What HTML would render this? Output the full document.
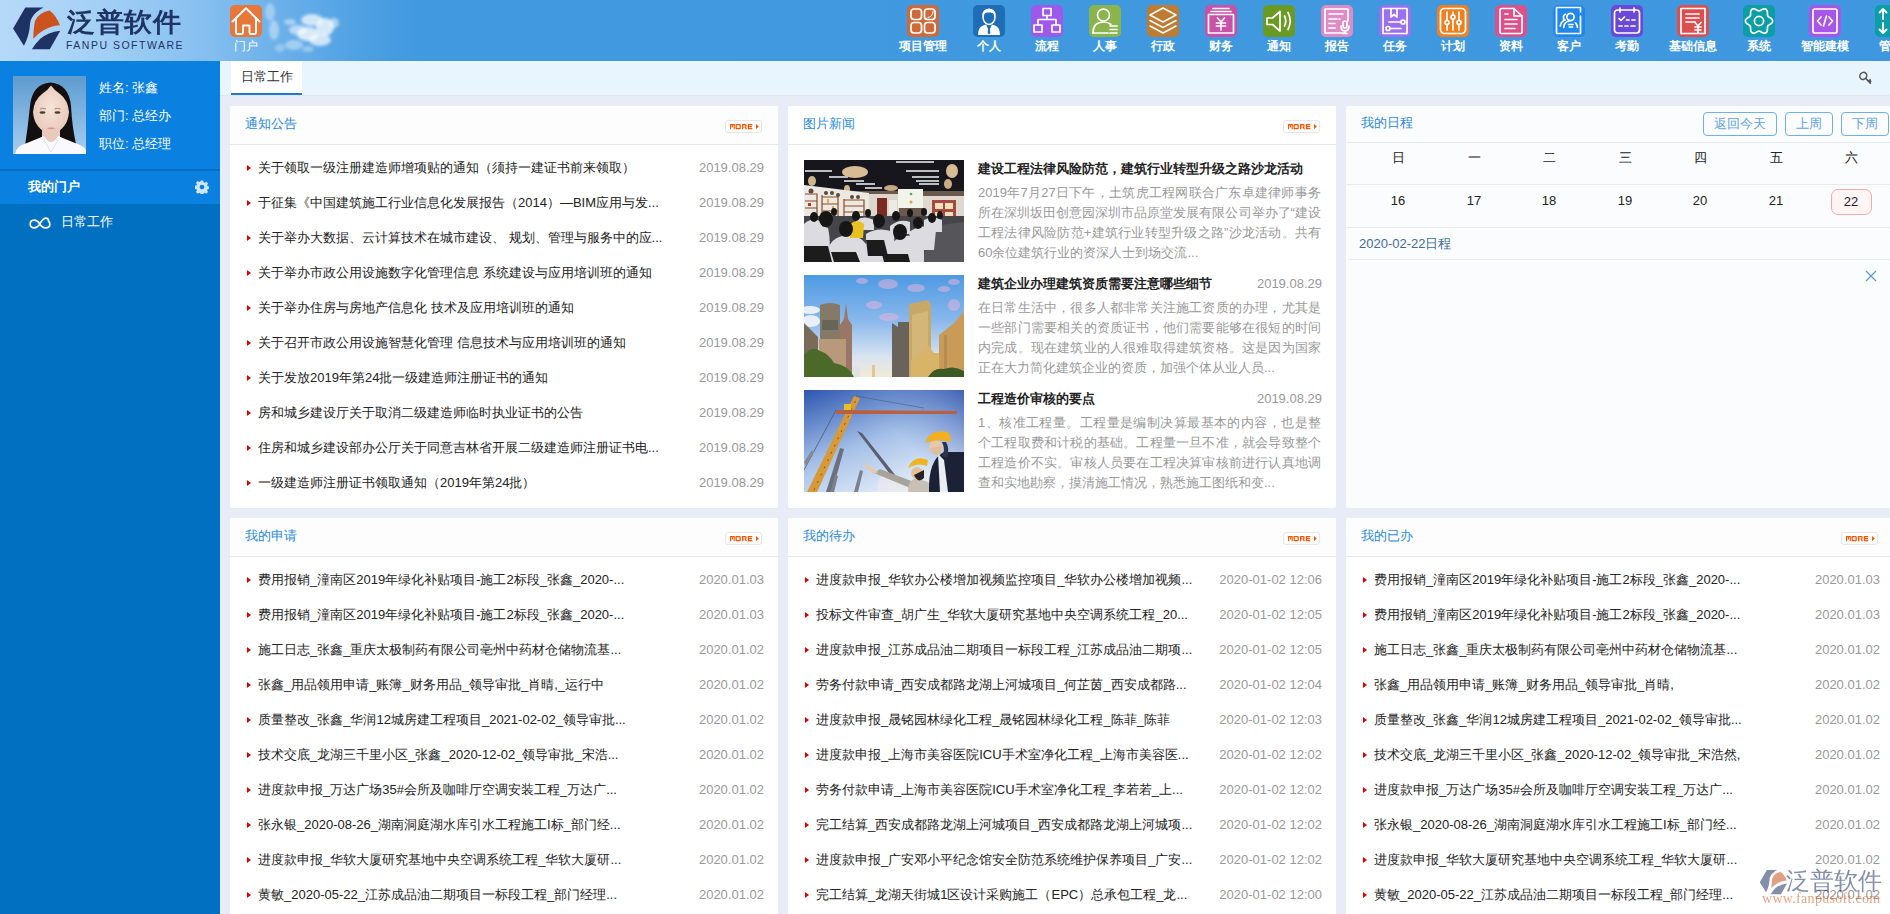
<!DOCTYPE html>
<html><head><meta charset="utf-8">
<style>
*{margin:0;padding:0;box-sizing:border-box}
html,body{width:1890px;height:914px;overflow:hidden}
body{font-family:"Liberation Sans",sans-serif;font-size:13px;color:#333;background:#e8ecf6;position:relative}
#hdr{position:absolute;left:0;top:0;width:1890px;height:61px;overflow:hidden;background:linear-gradient(90deg,#b6d9f8 0px,#a8d2f6 80px,#90c5f2 170px,#7cbaed 230px,#64ace8 300px,#4c9fe2 370px,#4199df 420px,#3f98df 1890px)}
#logo{position:absolute;left:0;top:0}
.logotxt{position:absolute;left:67px;top:6px;font-size:28px;line-height:36px;color:#1d3465;font-weight:bold;letter-spacing:0.6px;transform:scaleY(0.93);transform-origin:0 0}
.logoen{position:absolute;left:66px;top:39px;font-size:10.5px;line-height:13px;color:#1d3465;letter-spacing:1.5px}
.nav{position:absolute;top:0;height:61px}
.nav .ic{position:absolute;top:5px;width:32px;height:32px;border-radius:5px}
.nav .ic svg{position:absolute;left:0;top:0}
.nav .lb{position:absolute;top:38px;left:0;width:100%;text-align:center;font-size:12px;line-height:16px;color:#fff;white-space:nowrap;font-weight:bold}
#side{position:absolute;left:0;top:61px;width:220px;height:853px;background:#0270c1}
#side .top{position:absolute;left:0;top:0;width:220px;height:143px;background:#0a80e0}
#side .div{position:absolute;left:0;top:108px;width:220px;height:2px;background:#0a6fc4}
.uinfo{position:absolute;left:99px;color:#fff;font-size:13px;line-height:16px;white-space:nowrap}
#tabbar{position:absolute;left:220px;top:61px;width:1670px;height:35px;background:#e8f5fe;border-bottom:1px solid #e4e6ea}
#tab{position:absolute;left:11px;top:0;width:71px;height:34px;background:#fff;border-bottom:2px solid #1f7ad0;text-align:center;line-height:32px;font-size:13px;color:#333}
.panel{position:absolute;width:548px;background:#fff;border-radius:2px;overflow:hidden}
.ph{height:39px;border-bottom:1px solid #e8e8e8;background:#fcfdfc;position:relative}
.ph .t{position:absolute;left:15px;top:10px;font-size:13px;color:#2b8ae2;line-height:16px}
.more{position:absolute;left:495px;top:14px;width:37px;height:13px;border:1px solid #e6e6e6;border-radius:3px;background:#fff}
.li{position:absolute;left:0;width:548px;height:20px;line-height:20px}
.li .tri{position:absolute;left:17px;top:8px;width:0;height:0;border-left:4px solid #e10000;border-top:3px solid transparent;border-bottom:3px solid transparent}
.li .tx{position:absolute;left:28px;top:1px;color:#222;white-space:nowrap}
.li .dt{position:absolute;right:14px;top:1px;color:#999;white-space:nowrap}
.news .img{position:absolute;left:16px;width:160px;height:102px;overflow:hidden}
.news .nt{position:absolute;left:190px;width:343px;font-weight:bold;color:#222;line-height:20px;white-space:nowrap}
.news .nd{position:absolute;right:14px;color:#999;line-height:20px}
.news .nb{position:absolute;left:190px;width:343px;color:#999;line-height:20px}
.news .nb div{text-align:justify;text-align-last:justify;height:20px;white-space:nowrap;overflow:visible}
.btn{position:absolute;top:6px;height:24px;border:1px solid #6fb0ea;border-radius:4px;color:#5fa3e3;font-size:13px;line-height:22px;text-align:center}
.wk{position:absolute;width:40px;text-align:center;color:#222;line-height:20px}
.hl{position:absolute;left:0;width:548px;height:1px;background:#e8eaec}
</style></head><body>

<div id="hdr">
<svg style="position:absolute;left:250px;top:0" width="110" height="61" viewBox="0 0 110 61">
<defs><filter id="bl" x="-50%" y="-50%" width="200%" height="200%"><feGaussianBlur stdDeviation="1.8"/></filter></defs>
<g fill="#fff" filter="url(#bl)">
<ellipse cx="20" cy="12" rx="5" ry="9" opacity="0.35"/>
<ellipse cx="24" cy="30" rx="5" ry="10" opacity="0.4"/>
<ellipse cx="40" cy="22" rx="6" ry="3" opacity="0.45"/>
<ellipse cx="48" cy="30" rx="9" ry="5" opacity="0.55"/>
<ellipse cx="62" cy="20" rx="11" ry="6" opacity="0.7"/>
<ellipse cx="75" cy="27" rx="9" ry="9" opacity="0.75"/>
<ellipse cx="58" cy="34" rx="11" ry="7" opacity="0.75"/>
<ellipse cx="70" cy="40" rx="11" ry="6" opacity="0.7"/>
<ellipse cx="84" cy="23" rx="5" ry="5" opacity="0.5"/>
<ellipse cx="44" cy="45" rx="9" ry="5" opacity="0.4"/>
<ellipse cx="30" cy="48" rx="5" ry="4" opacity="0.3"/>
<ellipse cx="58" cy="49" rx="6" ry="3" opacity="0.35"/>
</g></svg>
<svg id="logo" width="64" height="61" viewBox="0 0 64 61">
<path fill="#1e3263" d="M13.1 28.5 L25.3 7.4 L43.6 7.4 C36 11 30.5 17 30 24 C29.5 33 27 40 23.9 45.8 Z"/>
<path fill="#cc531e" d="M49.5 10.5 Q56 15 60 25.3 Q51 26 44 30 Q38 33.5 33.3 38.7 Q33.5 28 35 21 Q38 13 49.5 10.5Z"/>
<path fill="#1e3263" d="M60.3 30.7 L49.8 49.2 L31.9 49.2 Q36 43 40 39 Q48 32 60.3 30.7Z"/>
</svg>
<div class="logotxt">泛普软件</div><div class="logoen">FANPU SOFTWARE</div>
<div class="nav" style="left:214px;width:64px"><div class="ic" style="left:16px;background:#e8773a"><svg width="32" height="32" viewBox="0 0 32 32"><path stroke-width="1.9" fill="none" stroke="#fff" stroke-linecap="round" stroke-linejoin="round" d="M2.5 16.5 L16 3.3 L29.5 16.5"/><path stroke-width="1.9" fill="none" stroke="#fff" stroke-linecap="round" stroke-linejoin="round" d="M6 13 V27.5 Q6 29 7.5 29 H11.5 Q13 29 13 27.5 V20.5 H19.5 V27.5 Q19.5 29 21 29 H24.5 Q26 29 26 27.5 V13"/></svg></div><div class="lb" style="font-weight:normal">门户</div></div>
<div class="nav" style="left:886px;width:74px"><div class="ic" style="left:21px;background:#cd6a38"><svg width="32" height="32" viewBox="0 0 32 32"><rect fill="none" stroke="#fff" stroke-width="1.7" stroke-linecap="round" stroke-linejoin="round" x="4" y="4" width="10.5" height="10.5" rx="3"/><rect fill="none" stroke="#fff" stroke-width="1.7" stroke-linecap="round" stroke-linejoin="round" x="17.5" y="4" width="10.5" height="10.5" rx="3"/><rect fill="none" stroke="#fff" stroke-width="1.7" stroke-linecap="round" stroke-linejoin="round" x="4" y="17.5" width="10.5" height="10.5" rx="3"/><rect fill="none" stroke="#fff" stroke-width="1.7" stroke-linecap="round" stroke-linejoin="round" x="17.5" y="17.5" width="10.5" height="10.5" rx="3"/><path stroke-width="1" fill="none" stroke="#fff" stroke-linecap="round" stroke-linejoin="round" d="M26 6 Q26 12 21 12.5"/></svg></div><div class="lb">项目管理</div></div>
<div class="nav" style="left:960px;width:58px"><div class="ic" style="left:13px;background:#1e6db5"><svg width="32" height="32" viewBox="0 0 32 32"><path fill="#fff" d="M5 30 Q5 22 10 20.5 L13 19.5 L16 26 L19 19.5 L22 20.5 Q27 22 27 30 Z"/><path fill="#1e6db5" d="M15.2 21 L16.8 21 L17.3 28 L16 29.5 L14.7 28 Z"/><ellipse cx="16" cy="12" rx="6" ry="7.5" fill="#1e6db5" stroke="#fff" stroke-width="1.6"/><path fill="#fff" d="M9.3 11 Q9 4 16 3.5 Q23 4 22.7 11 Q21 7 16 7.5 Q11 7 9.3 11Z"/></svg></div><div class="lb">个人</div></div>
<div class="nav" style="left:1018px;width:58px"><div class="ic" style="left:13px;background:#9d58ec"><svg width="32" height="32" viewBox="0 0 32 32"><rect fill="none" stroke="#fff" stroke-width="1.7" stroke-linecap="round" stroke-linejoin="round" x="12" y="3.5" width="8" height="7"/><path fill="none" stroke="#fff" stroke-width="1.7" stroke-linecap="round" stroke-linejoin="round" d="M16 10.5 V14.5 M7 20 V14.5 H25 V20"/><rect fill="none" stroke="#fff" stroke-width="1.7" stroke-linecap="round" stroke-linejoin="round" x="3" y="20" width="8" height="7"/><rect fill="none" stroke="#fff" stroke-width="1.7" stroke-linecap="round" stroke-linejoin="round" x="21" y="20" width="8" height="7"/></svg></div><div class="lb">流程</div></div>
<div class="nav" style="left:1076px;width:58px"><div class="ic" style="left:13px;background:#8ab44c"><svg width="32" height="32" viewBox="0 0 32 32"><circle fill="none" stroke="#fff" stroke-width="1.7" stroke-linecap="round" stroke-linejoin="round" cx="14.5" cy="10" r="6"/><path fill="none" stroke="#fff" stroke-width="1.7" stroke-linecap="round" stroke-linejoin="round" d="M4 28 Q4 17 14.5 17 Q19 17 22 19.5"/><path fill="none" stroke="#fff" stroke-width="1.7" stroke-linecap="round" stroke-linejoin="round" d="M4 28 H19"/><path fill="none" stroke="#fff" stroke-width="1.7" stroke-linecap="round" stroke-linejoin="round" d="M21 21 H28 M21 24.5 H28 M21 28 H28"/></svg></div><div class="lb">人事</div></div>
<div class="nav" style="left:1134px;width:58px"><div class="ic" style="left:13px;background:#bf7b30"><svg width="32" height="32" viewBox="0 0 32 32"><path stroke-width="1.5" fill="none" stroke="#fff" stroke-linecap="round" stroke-linejoin="round" d="M16 3 L29 10 L16 17 L3 10 Z"/><path stroke-width="1.5" fill="none" stroke="#fff" stroke-linecap="round" stroke-linejoin="round" d="M3 15.5 L16 22.5 L29 15.5"/><path stroke-width="1.5" fill="none" stroke="#fff" stroke-linecap="round" stroke-linejoin="round" d="M3 21 L16 28 L29 21"/></svg></div><div class="lb">行政</div></div>
<div class="nav" style="left:1192px;width:58px"><div class="ic" style="left:13px;background:#c951a8"><svg width="32" height="32" viewBox="0 0 32 32"><path fill="none" stroke="#fff" stroke-width="1.7" stroke-linecap="round" stroke-linejoin="round" d="M8 3.5 H24 M6 6.5 H26"/><rect fill="none" stroke="#fff" stroke-width="1.7" stroke-linecap="round" stroke-linejoin="round" x="3.5" y="9.5" width="25" height="18.5"/><path fill="none" stroke="#fff" stroke-width="1.7" stroke-linecap="round" stroke-linejoin="round" d="M12.5 13 L16 17 L19.5 13 M11.5 18 H20.5 M11.5 21 H20.5 M16 17 V25"/></svg></div><div class="lb">财务</div></div>
<div class="nav" style="left:1250px;width:58px"><div class="ic" style="left:13px;background:#6b9a24"><svg width="32" height="32" viewBox="0 0 32 32"><path fill="none" stroke="#fff" stroke-width="1.7" stroke-linecap="round" stroke-linejoin="round" d="M4 13 H9.5 L17 6.5 V26 L9.5 19.5 H4 Z"/><path fill="none" stroke="#fff" stroke-width="1.7" stroke-linecap="round" stroke-linejoin="round" d="M21.5 11 Q24 16 21.5 21 M25 7.5 Q29.5 16 25 24.5"/></svg></div><div class="lb">通知</div></div>
<div class="nav" style="left:1308px;width:58px"><div class="ic" style="left:13px;background:#de8cc6"><svg width="32" height="32" viewBox="0 0 32 32"><path fill="none" stroke="#fff" stroke-width="1.7" stroke-linecap="round" stroke-linejoin="round" d="M23 28 H4 V4 H27 V16"/><path fill="none" stroke="#fff" stroke-width="1.7" stroke-linecap="round" stroke-linejoin="round" d="M8 9 H22 M8 14 H16 M8 18.5 H14 M8 23 H14 M18 14 H19"/><rect fill="none" stroke="#fff" stroke-width="1.7" stroke-linecap="round" stroke-linejoin="round" x="22" y="16" width="4" height="7" rx="2"/><path fill="none" stroke="#fff" stroke-width="1.7" stroke-linecap="round" stroke-linejoin="round" d="M20 21 Q20 26 24 26 Q28 26 28 21 M24 26 V28.5 M22 28.5 H26"/></svg></div><div class="lb">报告</div></div>
<div class="nav" style="left:1366px;width:58px"><div class="ic" style="left:13px;background:#9a70f0"><svg width="32" height="32" viewBox="0 0 32 32"><rect fill="none" stroke="#fff" stroke-width="1.7" stroke-linecap="round" stroke-linejoin="round" x="4" y="3.5" width="24" height="25"/><path fill="none" stroke="#fff" stroke-width="1.7" stroke-linecap="round" stroke-linejoin="round" d="M12 3.5 V12 L15 9.5 L18 12 V3.5"/><circle fill="none" stroke="#fff" stroke-width="1.7" stroke-linecap="round" stroke-linejoin="round" cx="24" cy="17" r="2"/><path fill="none" stroke="#fff" stroke-width="1.7" stroke-linecap="round" stroke-linejoin="round" d="M10 17 H22"/><circle fill="none" stroke="#fff" stroke-width="1.7" stroke-linecap="round" stroke-linejoin="round" cx="9" cy="23.5" r="2"/><path fill="none" stroke="#fff" stroke-width="1.7" stroke-linecap="round" stroke-linejoin="round" d="M11 23.5 H22"/></svg></div><div class="lb">任务</div></div>
<div class="nav" style="left:1424px;width:58px"><div class="ic" style="left:13px;background:#f0801f"><svg width="32" height="32" viewBox="0 0 32 32"><rect fill="none" stroke="#fff" stroke-width="1.7" stroke-linecap="round" stroke-linejoin="round" x="3.5" y="3.5" width="25" height="25" rx="4"/><path fill="none" stroke="#fff" stroke-width="1.7" stroke-linecap="round" stroke-linejoin="round" d="M10 7 V15.5 M10 19.5 V25 M16 7 V10 M16 14 V25 M22 7 V15.5 M22 19.5 V25"/><circle fill="none" stroke="#fff" stroke-width="1.7" stroke-linecap="round" stroke-linejoin="round" cx="10" cy="17.5" r="2"/><circle fill="none" stroke="#fff" stroke-width="1.7" stroke-linecap="round" stroke-linejoin="round" cx="16" cy="12" r="2"/><circle fill="none" stroke="#fff" stroke-width="1.7" stroke-linecap="round" stroke-linejoin="round" cx="22" cy="17.5" r="2"/></svg></div><div class="lb">计划</div></div>
<div class="nav" style="left:1482px;width:58px"><div class="ic" style="left:13px;background:#dd508a"><svg width="32" height="32" viewBox="0 0 32 32"><path fill="none" stroke="#fff" stroke-width="1.7" stroke-linecap="round" stroke-linejoin="round" d="M5 5 Q5 3.5 6.5 3.5 H19 L27 11 V27 Q27 28.5 25.5 28.5 H6.5 Q5 28.5 5 27 Z"/><path fill="none" stroke="#fff" stroke-width="1.7" stroke-linecap="round" stroke-linejoin="round" d="M19 3.5 V11 H27"/><path fill="none" stroke="#fff" stroke-width="1.7" stroke-linecap="round" stroke-linejoin="round" d="M10 9 H13 M10 14.5 H22 M10 19 H22 M10 23.5 H20"/></svg></div><div class="lb">资料</div></div>
<div class="nav" style="left:1540px;width:58px"><div class="ic" style="left:13px;background:#1f88ea"><svg width="32" height="32" viewBox="0 0 32 32"><path fill="none" stroke="#fff" stroke-width="1.7" stroke-linecap="round" stroke-linejoin="round" d="M27.5 7 V2.5 H3.5 V28.5 H27.5 V11"/><circle fill="none" stroke="#fff" stroke-width="1.7" stroke-linecap="round" stroke-linejoin="round" cx="17.5" cy="12" r="3.6"/><path fill="none" stroke="#fff" stroke-width="1.7" stroke-linecap="round" stroke-linejoin="round" d="M10.8 22.5 Q11 17 16 16 M22.5 17.8 Q24.2 19.8 24.5 22.5 M12.5 9.3 Q9.5 10.5 10.8 14.2 M7.3 21 Q8 16.5 12 15 M15.5 19.5 H20 M16.3 22 H19.5"/></svg></div><div class="lb">客户</div></div>
<div class="nav" style="left:1598px;width:58px"><div class="ic" style="left:13px;background:#6c48d8"><svg width="32" height="32" viewBox="0 0 32 32"><rect fill="none" stroke="#fff" stroke-width="1.7" stroke-linecap="round" stroke-linejoin="round" x="3.5" y="5" width="25" height="23" rx="3"/><path fill="none" stroke="#fff" stroke-width="1.7" stroke-linecap="round" stroke-linejoin="round" d="M9 3 V7 M23 3 V7"/><path fill="none" stroke="#fff" stroke-width="1.7" stroke-linecap="round" stroke-linejoin="round" d="M8 13.5 L10 15.5 L13.5 12 M15.5 15 H18 M21 15 H24 M8 21 H11 M14 21 H17 M20 21 H24"/></svg></div><div class="lb">考勤</div></div>
<div class="nav" style="left:1656px;width:74px"><div class="ic" style="left:21px;background:#dd4f4f"><svg width="32" height="32" viewBox="0 0 32 32"><rect fill="none" stroke="#fff" stroke-width="1.7" stroke-linecap="round" stroke-linejoin="round" x="4" y="3.5" width="24" height="25"/><path fill="none" stroke="#fff" stroke-width="1.7" stroke-linecap="round" stroke-linejoin="round" d="M9 9 H22 M9 13 H22 M9 17 H18"/><path fill="none" stroke="#fff" stroke-width="1.7" stroke-linecap="round" stroke-linejoin="round" d="M18 17.5 L21 21 L24 17.5 M18 22 H24 M18 25 H24 M21 21 V28"/></svg></div><div class="lb">基础信息</div></div>
<div class="nav" style="left:1730px;width:58px"><div class="ic" style="left:13px;background:#0b9ea6"><svg width="32" height="32" viewBox="0 0 32 32"><path stroke-width="1.7" fill="none" stroke="#fff" stroke-linecap="round" stroke-linejoin="round" d="M29.65 16.00 L29.49 16.88 L29.03 17.71 L28.33 18.45 L27.49 19.08 L26.63 19.61 L25.85 20.08 L25.22 20.55 L24.79 21.07 L24.55 21.71 L24.46 22.49 L24.44 23.40 L24.41 24.41 L24.29 25.45 L24.00 26.42 L23.51 27.24 L22.83 27.82 L21.98 28.12 L21.03 28.14 L20.04 27.90 L19.08 27.49 L18.19 27.01 L17.39 26.57 L16.67 26.26 L16.00 26.15 L15.33 26.26 L14.61 26.57 L13.81 27.01 L12.92 27.49 L11.96 27.90 L10.97 28.14 L10.02 28.12 L9.18 27.82 L8.49 27.24 L8.00 26.42 L7.71 25.45 L7.59 24.41 L7.56 23.40 L7.54 22.49 L7.45 21.71 L7.21 21.07 L6.78 20.55 L6.15 20.08 L5.37 19.61 L4.51 19.08 L3.67 18.45 L2.97 17.71 L2.51 16.88 L2.35 16.00 L2.51 15.12 L2.97 14.29 L3.67 13.55 L4.51 12.92 L5.37 12.39 L6.15 11.92 L6.78 11.45 L7.21 10.93 L7.45 10.29 L7.54 9.51 L7.56 8.60 L7.59 7.59 L7.71 6.55 L8.00 5.58 L8.49 4.76 L9.17 4.18 L10.02 3.88 L10.97 3.86 L11.96 4.10 L12.92 4.51 L13.81 4.99 L14.61 5.43 L15.33 5.74 L16.00 5.85 L16.67 5.74 L17.39 5.43 L18.19 4.99 L19.08 4.51 L20.04 4.10 L21.03 3.86 L21.98 3.88 L22.83 4.18 L23.51 4.76 L24.00 5.58 L24.29 6.55 L24.41 7.59 L24.44 8.60 L24.46 9.51 L24.55 10.29 L24.79 10.92 L25.22 11.45 L25.85 11.92 L26.63 12.39 L27.49 12.92 L28.33 13.55 L29.03 14.29 L29.49 15.12Z"/><circle fill="none" stroke="#fff" stroke-width="1.7" stroke-linecap="round" stroke-linejoin="round" cx="16" cy="16" r="4.6"/></svg></div><div class="lb">系统</div></div>
<div class="nav" style="left:1788px;width:74px"><div class="ic" style="left:21px;background:#a856ea"><svg width="32" height="32" viewBox="0 0 32 32"><rect fill="none" stroke="#fff" stroke-width="1.7" stroke-linecap="round" stroke-linejoin="round" x="4" y="4" width="24" height="24" rx="2"/><path fill="none" stroke="#fff" stroke-width="1.7" stroke-linecap="round" stroke-linejoin="round" d="M12 12 L8.5 16 L12 20 M20 12 L23.5 16 L20 20 M17.5 11 L14.5 21"/></svg></div><div class="lb">智能建模</div></div>
<div class="nav" style="left:1862px;width:58px"><div class="ic" style="left:13px;background:#0b9ea6"><svg width="32" height="32" viewBox="0 0 32 32"><path stroke-width="1.9" fill="none" stroke="#fff" stroke-linecap="round" stroke-linejoin="round" d="M8 4 V14 M4.5 7.5 L8 4 L11.5 7.5 M8 18 V28 M4.5 24.5 L8 28 L11.5 24.5"/></svg></div><div class="lb">管理</div></div>
</div>
<div id="side"><div class="top"></div><div class="div"></div>
<svg style="position:absolute;left:13px;top:15px" width="73" height="78" viewBox="0 0 73 78">
<defs><linearGradient id="pbg" x1="0" y1="0" x2="0" y2="1"><stop offset="0" stop-color="#5e9bd0"/><stop offset="1" stop-color="#a6cef0"/></linearGradient>
<radialGradient id="skin" cx="0.5" cy="0.45" r="0.6"><stop offset="0" stop-color="#f6e4da"/><stop offset="1" stop-color="#e8c6b6"/></radialGradient></defs>
<rect width="73" height="78" fill="url(#pbg)"/>
<path fill="#141012" d="M12 70 Q15 50 17 30 Q19 8 37.5 6.5 Q56 8 58 30 Q59 50 63 68 Q50 72 37 70 Q22 72 12 70Z"/>
<path fill="url(#skin)" d="M20 36 Q21 24 29 18 Q35 14 38 9.5 Q41 14 47 18 Q55 24 56 36 Q55 53 38 59 Q21 53 20 36Z"/>
<path fill="#e9cbbd" d="M29 52 H47 V68 H29Z"/>
<path fill="#fafafc" d="M2 78 Q3 70 14 67 Q24 63 31 60 Q38 72 45 60 Q52 63 62 67 Q71 70 73 74 V78Z"/>
<path fill="none" stroke="#d8d8e0" stroke-width=".8" d="M31 64 L38 76 L45 64"/>
<ellipse cx="29.5" cy="36.5" rx="3" ry="1.3" fill="#4a3a34"/><ellipse cx="44.5" cy="36.5" rx="3" ry="1.3" fill="#4a3a34"/>
<path d="M27 33 Q30 31.5 33 33 M41.5 33 Q44.5 31.5 47.5 33" stroke="#8a7066" stroke-width=".8" fill="none"/>
<path d="M33.5 52 Q38 54.5 42.5 52 Q38 51 33.5 52Z" fill="#e08a92"/>
</svg>
<div class="uinfo" style="top:19px">姓名: 张鑫</div>
<div class="uinfo" style="top:47px">部门: 总经办</div>
<div class="uinfo" style="top:75px">职位: 总经理</div>
<div style="position:absolute;left:28px;top:118px;color:#fff;font-weight:bold;font-size:13px;line-height:16px">我的门户</div>
<svg style="position:absolute;left:195px;top:119px" width="14" height="14" viewBox="0 0 16 16"><path fill="#cfe6fa" fill-rule="evenodd" d="M6.6 0.5h2.8l.4 2 1.4.6 1.7-1.1 2 2-1.1 1.7.6 1.4 2 .4v2.8l-2 .4-.6 1.4 1.1 1.7-2 2-1.7-1.1-1.4.6-.4 2H6.6l-.4-2-1.4-.6-1.7 1.1-2-2 1.1-1.7-.6-1.4-2-.4V6.6l2-.4.6-1.4L1.1 3.1l2-2 1.7 1.1 1.4-.6zM8 5.3A2.7 2.7 0 1 0 8 10.7 2.7 2.7 0 1 0 8 5.3z"/></svg>
<svg style="position:absolute;left:29px;top:155px" width="22" height="14" viewBox="0 0 22 14"><path fill="none" stroke="#fff" stroke-width="1.7" d="M10.5 7.5 Q8 4 5 4.2 Q1.2 4.5 1.2 8 Q1.2 11.6 5 11.8 Q8 12 10.5 8.5 Q13.5 3 16 2.2 Q19.5 1.8 19.6 5.2 Q21 6.4 20.8 8.8 Q20.4 11.8 16.5 11.8 Q13 11.8 10.5 7.5Z"/></svg>
<div style="position:absolute;left:61px;top:153px;color:#fff;font-size:13px;line-height:16px">日常工作</div>
</div>
<div id="tabbar"><div id="tab">日常工作</div>
<svg style="position:absolute;left:1636px;top:8px" width="18" height="18" viewBox="0 0 18 18"><ellipse cx="7.3" cy="6.9" rx="3.3" ry="3.7" transform="rotate(40 7.3 6.9)" fill="none" stroke="#555" stroke-width="1.5"/><path d="M9.6 9.3 L14.8 14.6 M12.6 12.4 L14.6 10.4 M13.6 13.4 L15.2 11.8" stroke="#555" stroke-width="1.6" fill="none"/></svg>
</div>
<div class="panel" style="left:230px;top:106px;height:402px">
<div class="ph"><span class="t">通知公告</span><span class="more"><svg width="37" height="13" viewBox="0 0 37 13" style="position:absolute;left:-1px;top:-1px"><g fill="#ff5500"><path d="M5 4h4.8v5.2H8.7V5.2H7.95V7.4H6.85V5.2H6.1v4H5z"/><path d="M11.2 4h3.9l.7.7v3.8l-.7.7h-3.9l-.7-.7V4.7zm.6 1.3v2.6h2.7V5.3z"/><path d="M17 4h3.9l.7.7v1.7l-.5.5.9 2.3h-1.4l-.8-2h-1.5v2H17zm1.3 1.3v1.4h2V5.3z"/><path d="M22.8 4h4.5v1.3h-3.2v.7h2.9v1.2h-2.9v.7h3.2v1.3h-4.5z"/><path d="M31 4l2.8 2.6L31 9.2z"/></g></svg></span></div>
<div class="li" style="top:51px"><i class="tri"></i><span class="tx">关于领取一级注册建造师增项贴的通知（须持一建证书前来领取）</span><span class="dt">2019.08.29</span></div>
<div class="li" style="top:86px"><i class="tri"></i><span class="tx">于征集《中国建筑施工行业信息化发展报告（2014）—BIM应用与发...</span><span class="dt">2019.08.29</span></div>
<div class="li" style="top:121px"><i class="tri"></i><span class="tx">关于举办大数据、云计算技术在城市建设、 规划、管理与服务中的应...</span><span class="dt">2019.08.29</span></div>
<div class="li" style="top:156px"><i class="tri"></i><span class="tx">关于举办市政公用设施数字化管理信息 系统建设与应用培训班的通知</span><span class="dt">2019.08.29</span></div>
<div class="li" style="top:191px"><i class="tri"></i><span class="tx">关于举办住房与房地产信息化 技术及应用培训班的通知</span><span class="dt">2019.08.29</span></div>
<div class="li" style="top:226px"><i class="tri"></i><span class="tx">关于召开市政公用设施智慧化管理 信息技术与应用培训班的通知</span><span class="dt">2019.08.29</span></div>
<div class="li" style="top:261px"><i class="tri"></i><span class="tx">关于发放2019年第24批一级建造师注册证书的通知</span><span class="dt">2019.08.29</span></div>
<div class="li" style="top:296px"><i class="tri"></i><span class="tx">房和城乡建设厅关于取消二级建造师临时执业证书的公告</span><span class="dt">2019.08.29</span></div>
<div class="li" style="top:331px"><i class="tri"></i><span class="tx">住房和城乡建设部办公厅关于同意吉林省开展二级建造师注册证书电...</span><span class="dt">2019.08.29</span></div>
<div class="li" style="top:366px"><i class="tri"></i><span class="tx">一级建造师注册证书领取通知（2019年第24批）</span><span class="dt">2019.08.29</span></div>
</div>
<div class="panel news" style="left:788px;top:106px;height:402px"><div class="ph" style="background:#fff"><span class="t">图片新闻</span><span class="more"><svg width="37" height="13" viewBox="0 0 37 13" style="position:absolute;left:-1px;top:-1px"><g fill="#ff5500"><path d="M5 4h4.8v5.2H8.7V5.2H7.95V7.4H6.85V5.2H6.1v4H5z"/><path d="M11.2 4h3.9l.7.7v3.8l-.7.7h-3.9l-.7-.7V4.7zm.6 1.3v2.6h2.7V5.3z"/><path d="M17 4h3.9l.7.7v1.7l-.5.5.9 2.3h-1.4l-.8-2h-1.5v2H17zm1.3 1.3v1.4h2V5.3z"/><path d="M22.8 4h4.5v1.3h-3.2v.7h2.9v1.2h-2.9v.7h3.2v1.3h-4.5z"/><path d="M31 4l2.8 2.6L31 9.2z"/></g></svg></span></div>
<div class="img" style="top:54px"><svg width="160" height="102" viewBox="0 0 160 102"><defs><filter id="f1" x="0" y="0" width="100%" height="100%"><feGaussianBlur stdDeviation="0.6"/></filter></defs><g filter="url(#f1)">
<rect width="160" height="102" fill="#6a5a4c"/>
<rect width="160" height="31" fill="#17181e"/>
<g stroke="#f4f4f4" stroke-width="1.3"><path d="M1 11 H28 M25 17 H44 M40 21 H60 M52 24 H71 M102 11 H135 M108 17 H135 M112 21 H135 M115 24 H135 M61 28 H78 M92 2 H130"/></g>
<ellipse cx="51" cy="12" rx="13" ry="6" fill="#d8bc94"/>
<ellipse cx="148" cy="11" rx="6" ry="7" fill="#d8bc94"/><ellipse cx="144" cy="24" rx="4" ry="5" fill="#c8ac84"/>
<ellipse cx="8" cy="21" rx="4" ry="5" fill="#d0b48c"/><ellipse cx="43" cy="29" rx="3" ry="4" fill="#d0b48c"/><ellipse cx="87" cy="28" rx="7" ry="3" fill="#c8a880"/>
<path d="M0 25 L65 33 V60 H0Z" fill="#ece8e2"/>
<g fill="none" stroke="#8a4a2a" stroke-width="1.2"><path d="M1 34 H13 V58 M1 41 H13 M1 48 H13 M18 35 V58 M18 37 H34 V58 M18 44 H34 M18 51 H34 M40 39 V58 M40 40 H60 V58 M40 46 H60 M40 52 H60"/></g>
<g fill="#5a4a40"><circle cx="7" cy="31" r="2.5"/><circle cx="22" cy="33" r="2"/><circle cx="28" cy="33" r="2"/><circle cx="34" cy="35" r="2"/><circle cx="48" cy="37" r="2"/><circle cx="54" cy="37" r="2"/></g>
<g fill="#d8b040"><rect x="23" y="39" width="2" height="4"/><rect x="28" y="46" width="2" height="4"/><rect x="4" y="43" width="3" height="3" fill="#c03030"/></g>
<rect x="65" y="34" width="30" height="24" fill="#dcd6cc"/>
<rect x="73" y="38" width="10" height="18" fill="#7a2a22"/><rect x="85" y="40" width="8" height="14" fill="#eceae4"/>
<rect x="94" y="29" width="25" height="19" fill="#f0f4ea"/><circle cx="107" cy="34" r="1.3" fill="#60a060"/><circle cx="107" cy="42" r="1.5" fill="#e0a050"/>
<rect x="119" y="36" width="41" height="30" fill="#dedad2"/>
<rect x="128" y="40" width="24" height="26" fill="#a8483a"/><g fill="#f0e0c0"><rect x="131" y="43" width="8" height="6"/><rect x="141" y="43" width="8" height="6"/><rect x="131" y="52" width="8" height="6"/><rect x="141" y="52" width="8" height="6"/></g>
<rect x="0" y="56" width="160" height="46" fill="#45454a"/>
<path d="M128 66 L160 62 V102 H118Z" fill="#55555a"/>
<g fill="#dcdce0"><path d="M0 102 V72 Q8 62 24 68 Q27 80 25 102Z"/><path d="M22 102 Q22 80 38 76 Q56 74 62 84 V102Z"/><path d="M62 102 V74 Q74 66 90 72 L91 102Z"/><path d="M82 102 Q84 80 100 76 Q116 74 120 84 V102Z"/><path d="M105 72 Q118 62 132 70 L130 90 H108Z"/><path d="M86 66 Q96 58 106 62 L106 74 H86Z"/><path d="M0 64 Q8 56 18 62 L18 72 H0Z"/><path d="M52 60 Q60 55 70 60 V70 H52Z"/><path d="M120 60 Q128 55 138 60 V72 H120Z"/></g>
<g fill="#e8c020"><path d="M46 64 Q54 58 60 64 L59 78 H46Z"/></g>
<g fill="#151515"><ellipse cx="22" cy="59" rx="7" ry="8"/><ellipse cx="42" cy="69" rx="7" ry="8"/><ellipse cx="75" cy="61" rx="6" ry="7"/><ellipse cx="96" cy="72" rx="7" ry="8"/><ellipse cx="114" cy="63" rx="5" ry="6"/><ellipse cx="128" cy="58" rx="4" ry="5"/><ellipse cx="10" cy="57" rx="4" ry="5"/><ellipse cx="52" cy="56" rx="4" ry="5"/><ellipse cx="92" cy="56" rx="4" ry="5"/><ellipse cx="30" cy="52" rx="3" ry="4"/><ellipse cx="64" cy="53" rx="3" ry="4"/><ellipse cx="106" cy="53" rx="3" ry="4"/><ellipse cx="120" cy="52" rx="3" ry="4"/><ellipse cx="136" cy="55" rx="3" ry="4"/></g>
<g fill="#1a1a1c"><path d="M0 86 H24 L28 102 H0Z"/><path d="M27 92 H52 L56 102 H30Z"/><path d="M62 80 H80 L84 96 H64Z"/><path d="M78 94 H104 L106 102 H80Z"/></g>
</g></svg></div>
<div class="nt" style="top:53px">建设工程法律风险防范，建筑行业转型升级之路沙龙活动</div>
<div class="nb" style="top:77px"><div>2019年7月27日下午，土筑虎工程网联合广东卓建律师事务</div><div>所在深圳坂田创意园深圳市品原堂发展有限公司举办了“建设</div><div>工程法律风险防范+建筑行业转型升级之路”沙龙活动。共有</div><div style="text-align:left;text-align-last:left">60余位建筑行业的资深人士到场交流...</div></div>
<div class="img" style="top:169px"><svg width="160" height="102" viewBox="0 0 160 102"><defs><filter id="f2" x="0" y="0" width="100%" height="100%"><feGaussianBlur stdDeviation="0.7"/></filter></defs><g filter="url(#f2)">
<defs><linearGradient id="sky2" x1="0" y1="0" x2="0" y2="1"><stop offset="0" stop-color="#4d9ae2"/><stop offset=".45" stop-color="#8ab8ec"/><stop offset=".8" stop-color="#d8e4f0"/><stop offset="1" stop-color="#f2ead8"/></linearGradient></defs>
<rect width="160" height="102" fill="url(#sky2)"/>
<g fill="#e4b4dc" opacity=".55"><ellipse cx="84" cy="9" rx="10" ry="5"/><ellipse cx="70" cy="30" rx="8" ry="4"/><ellipse cx="112" cy="13" rx="9" ry="4"/><ellipse cx="140" cy="14" rx="6" ry="3"/><ellipse cx="150" cy="7" rx="6" ry="3"/><ellipse cx="85" cy="42" rx="10" ry="4"/><ellipse cx="150" cy="30" rx="6" ry="6"/><ellipse cx="58" cy="6" rx="6" ry="3"/></g>
<g fill="#f4f6fa" opacity=".9"><ellipse cx="6" cy="35" rx="10" ry="4"/><ellipse cx="7" cy="46" rx="9" ry="6"/></g>
<path d="M16 102 V30 Q26 26 36 30 V102Z" fill="#857a68"/><rect x="18" y="45" width="16" height="10" fill="#4a5048" opacity=".5"/>
<path d="M36 102 V50 L40 44 L42 28 L44 44 L48 50 V102Z" fill="#9a7668"/>
<path d="M0 102 V48 L14 62 V102Z" fill="#7a6a58"/>
<rect x="15" y="64" width="27" height="38" fill="#b89a7a"/>
<path d="M88 102 V48 L94 52 V47 H105 V102Z" fill="#6a645c"/>
<path d="M105 102 V29 L124 25 L127 30 V102Z" fill="#c8a868"/><path d="M108 40 L124 36 V80 L108 90Z" fill="#e0c48a" opacity=".5"/>
<path d="M107 102 V86 L118 76 L124 70 L130 78 L136 78 V102Z" fill="#d8b468"/>
<path d="M135 102 V60 L150 48 L160 36 V102Z" fill="#c89c58"/><rect x="140" y="60" width="3" height="38" fill="#a8804a" opacity=".6"/>
<rect x="48" y="92" width="8" height="10" fill="#e0e4e0"/><rect x="68" y="90" width="3" height="12" fill="#e0c890"/>
<path d="M0 102 V80 Q8 70 16 76 Q24 78 30 88 Q44 90 50 102Z" fill="#4c6a2c"/>
<path d="M124 102 Q130 92 140 94 Q150 90 160 96 V102Z" fill="#3e5a26"/>
</g></svg></div>
<div class="nt" style="top:168px">建筑企业办理建筑资质需要注意哪些细节</div>
<div class="nd" style="top:168px">2019.08.29</div>
<div class="nb" style="top:192px"><div>在日常生活中，很多人都非常关注施工资质的办理，尤其是</div><div>一些部门需要相关的资质证书，他们需要能够在很短的时间</div><div>内完成。现在建筑业的人很难取得建筑资格。这是因为国家</div><div style="text-align:left;text-align-last:left">正在大力简化建筑企业的资质，加强个体从业人员...</div></div>
<div class="img" style="top:284px"><svg width="160" height="102" viewBox="0 0 160 102"><defs><filter id="f3" x="0" y="0" width="100%" height="100%"><feGaussianBlur stdDeviation="0.7"/></filter></defs><g filter="url(#f3)">
<defs><linearGradient id="sky3" x1="0" y1="0" x2="0.6" y2="1"><stop offset="0" stop-color="#2c56b0"/><stop offset=".55" stop-color="#a4c0e8"/><stop offset="1" stop-color="#e6eef8"/></linearGradient>
<linearGradient id="sky3b" x1="1" y1="0" x2="0" y2="0.6"><stop offset="0" stop-color="#3050a8" stop-opacity=".8"/><stop offset=".5" stop-color="#6a90d0" stop-opacity="0"/></linearGradient></defs>
<rect width="160" height="102" fill="url(#sky3)"/><rect width="160" height="102" fill="url(#sky3b)"/>
<path d="M3 102 L50 6 L56 8 L13 102Z" fill="#d89a38"/>
<path d="M10 100 L52 10" stroke="#a04a20" stroke-width="1" stroke-dasharray="2 6"/>
<path d="M32 20 L153 21 L153 24 L32 24Z" fill="#b86040"/>
<path d="M52 6 L120 18" stroke="#4a5a80" stroke-width=".6"/>
<path d="M32 20 L0 80" stroke="#4a5a7a" stroke-width=".8"/>
<rect x="40" y="14" width="7" height="6" fill="#e8c020"/>
<path d="M53 41 L58 43 L92 86 L89 88Z" fill="#5a6070"/>
<path d="M0 72 L8 60 L10 62 L2 76Z" fill="#8a8a96"/>
<path d="M22 102 L36 58 L40 59 L28 102Z" fill="#6a707c"/>
<path d="M26 102 L31 85 L34 86 L30 102Z" fill="#7a808c"/><path d="M50 102 L56 80 L59 81 L54 102Z" fill="#7a808c"/>
<path d="M74 102 Q72 92 78 86 L104 96 L112 102Z" fill="#e8eaee" opacity=".8"/>
<path d="M70 83 L76 79 L110 92 L106 98Z" fill="#a8a49c"/>
<path d="M60 72 L68 78 L74 82 L70 84 L62 78Z" fill="#e8c8a8"/>
<path d="M104 102 Q104 90 112 88 L124 92 L130 102Z" fill="#c8c0b4"/>
<circle cx="113" cy="83" r="6" fill="#e4c098"/><path d="M110 85 Q114 94 120 88 L120 80Z" fill="#2a2220"/>
<path d="M104 78 Q110 64 124 70 L123 76 Q114 72 104 78Z" fill="#f0b420"/>
<path d="M125 102 Q124 70 140 62 L160 62 V102Z" fill="#1c2434"/>
<circle cx="132" cy="57" r="7" fill="#e8c8a8"/><path d="M126 58 Q128 66 136 66 L138 56Z" fill="#d8b898" opacity=".6"/>
<path d="M138 52 Q142 60 138 66 L143 68 Q146 58 142 52Z" fill="#2a3650"/>
<path d="M121 53 Q126 38 144 42 Q148 48 146 52 Q134 48 121 53Z" fill="#f0b020"/>
<path d="M134 64 L140 70 L144 102 H136Z" fill="#e8eef4"/>
</g></svg></div>
<div class="nt" style="top:283px">工程造价审核的要点</div>
<div class="nd" style="top:283px">2019.08.29</div>
<div class="nb" style="top:307px"><div>1、核准工程量。工程量是编制决算最基本的内容，也是整</div><div>个工程取费和计税的基础。工程量一旦不准，就会导致整个</div><div>工程造价不实。审核人员要在工程决算审核前进行认真地调</div><div style="text-align:left;text-align-last:left">查和实地勘察，摸清施工情况，熟悉施工图纸和变...</div></div>
</div>
<div class="panel" style="left:1346px;top:106px;height:402px;background:#fbfcfd">
<div class="ph" style="height:37px;border-bottom:1px solid #e8e8e8;background:transparent"><span class="t" style="top:9px">我的日程</span>
<span class="btn" style="left:357px;width:74px">返回今天</span><span class="btn" style="left:439px;width:48px">上周</span><span class="btn" style="left:495px;width:48px">下周</span></div>
<div class="wk" style="left:32px;top:42px">日</div>
<div class="wk" style="left:108px;top:42px">一</div>
<div class="wk" style="left:183px;top:42px">二</div>
<div class="wk" style="left:259px;top:42px">三</div>
<div class="wk" style="left:334px;top:42px">四</div>
<div class="wk" style="left:410px;top:42px">五</div>
<div class="wk" style="left:485px;top:42px">六</div>
<div class="hl" style="top:78px"></div>
<div class="wk" style="left:32px;top:85px">16</div>
<div class="wk" style="left:108px;top:85px">17</div>
<div class="wk" style="left:183px;top:85px">18</div>
<div class="wk" style="left:259px;top:85px">19</div>
<div class="wk" style="left:334px;top:85px">20</div>
<div class="wk" style="left:410px;top:85px">21</div>
<div style="position:absolute;left:485px;top:83px;width:41px;height:26px;border:1px solid #f6a9a9;border-radius:7px;background:#fff5f5"></div>
<div class="wk" style="left:485px;top:86px">22</div>
<div class="hl" style="top:121px"></div>
<div style="position:absolute;left:13px;top:130px;color:#3f6d98;line-height:16px">2020-02-22日程</div>
<div class="hl" style="top:153px;left:3px"></div>
<svg style="position:absolute;left:519px;top:164px" width="12" height="12" viewBox="0 0 12 12"><path d="M1 1 L11 11 M11 1 L1 11" stroke="#5a9ad8" stroke-width="1.3"/></svg>
</div>
<div class="panel" style="left:230px;top:518px;height:420px">
<div class="ph"><span class="t">我的申请</span><span class="more"><svg width="37" height="13" viewBox="0 0 37 13" style="position:absolute;left:-1px;top:-1px"><g fill="#ff5500"><path d="M5 4h4.8v5.2H8.7V5.2H7.95V7.4H6.85V5.2H6.1v4H5z"/><path d="M11.2 4h3.9l.7.7v3.8l-.7.7h-3.9l-.7-.7V4.7zm.6 1.3v2.6h2.7V5.3z"/><path d="M17 4h3.9l.7.7v1.7l-.5.5.9 2.3h-1.4l-.8-2h-1.5v2H17zm1.3 1.3v1.4h2V5.3z"/><path d="M22.8 4h4.5v1.3h-3.2v.7h2.9v1.2h-2.9v.7h3.2v1.3h-4.5z"/><path d="M31 4l2.8 2.6L31 9.2z"/></g></svg></span></div>
<div class="li" style="top:51px"><i class="tri"></i><span class="tx">费用报销_潼南区2019年绿化补贴项目-施工2标段_张鑫_2020-...</span><span class="dt">2020.01.03</span></div>
<div class="li" style="top:86px"><i class="tri"></i><span class="tx">费用报销_潼南区2019年绿化补贴项目-施工2标段_张鑫_2020-...</span><span class="dt">2020.01.03</span></div>
<div class="li" style="top:121px"><i class="tri"></i><span class="tx">施工日志_张鑫_重庆太极制药有限公司亳州中药材仓储物流基...</span><span class="dt">2020.01.02</span></div>
<div class="li" style="top:156px"><i class="tri"></i><span class="tx">张鑫_用品领用申请_账簿_财务用品_领导审批_肖晴,_运行中</span><span class="dt">2020.01.02</span></div>
<div class="li" style="top:191px"><i class="tri"></i><span class="tx">质量整改_张鑫_华润12城房建工程项目_2021-02-02_领导审批...</span><span class="dt">2020.01.02</span></div>
<div class="li" style="top:226px"><i class="tri"></i><span class="tx">技术交底_龙湖三千里小区_张鑫_2020-12-02_领导审批_宋浩...</span><span class="dt">2020.01.02</span></div>
<div class="li" style="top:261px"><i class="tri"></i><span class="tx">进度款申报_万达广场35#会所及咖啡厅空调安装工程_万达广...</span><span class="dt">2020.01.02</span></div>
<div class="li" style="top:296px"><i class="tri"></i><span class="tx">张永银_2020-08-26_湖南洞庭湖水库引水工程施工I标_部门经...</span><span class="dt">2020.01.02</span></div>
<div class="li" style="top:331px"><i class="tri"></i><span class="tx">进度款申报_华软大厦研究基地中央空调系统工程_华软大厦研...</span><span class="dt">2020.01.02</span></div>
<div class="li" style="top:366px"><i class="tri"></i><span class="tx">黄敏_2020-05-22_江苏成品油二期项目一标段工程_部门经理...</span><span class="dt">2020.01.02</span></div>
</div>
<div class="panel" style="left:788px;top:518px;height:420px">
<div class="ph"><span class="t">我的待办</span><span class="more"><svg width="37" height="13" viewBox="0 0 37 13" style="position:absolute;left:-1px;top:-1px"><g fill="#ff5500"><path d="M5 4h4.8v5.2H8.7V5.2H7.95V7.4H6.85V5.2H6.1v4H5z"/><path d="M11.2 4h3.9l.7.7v3.8l-.7.7h-3.9l-.7-.7V4.7zm.6 1.3v2.6h2.7V5.3z"/><path d="M17 4h3.9l.7.7v1.7l-.5.5.9 2.3h-1.4l-.8-2h-1.5v2H17zm1.3 1.3v1.4h2V5.3z"/><path d="M22.8 4h4.5v1.3h-3.2v.7h2.9v1.2h-2.9v.7h3.2v1.3h-4.5z"/><path d="M31 4l2.8 2.6L31 9.2z"/></g></svg></span></div>
<div class="li" style="top:51px"><i class="tri"></i><span class="tx">进度款申报_华软办公楼增加视频监控项目_华软办公楼增加视频...</span><span class="dt">2020-01-02 12:06</span></div>
<div class="li" style="top:86px"><i class="tri"></i><span class="tx">投标文件审查_胡广生_华软大厦研究基地中央空调系统工程_20...</span><span class="dt">2020-01-02 12:05</span></div>
<div class="li" style="top:121px"><i class="tri"></i><span class="tx">进度款申报_江苏成品油二期项目一标段工程_江苏成品油二期项...</span><span class="dt">2020-01-02 12:05</span></div>
<div class="li" style="top:156px"><i class="tri"></i><span class="tx">劳务付款申请_西安成都路龙湖上河城项目_何芷茵_西安成都路...</span><span class="dt">2020-01-02 12:04</span></div>
<div class="li" style="top:191px"><i class="tri"></i><span class="tx">进度款申报_晟铭园林绿化工程_晟铭园林绿化工程_陈菲_陈菲</span><span class="dt">2020-01-02 12:03</span></div>
<div class="li" style="top:226px"><i class="tri"></i><span class="tx">进度款申报_上海市美容医院ICU手术室净化工程_上海市美容医...</span><span class="dt">2020-01-02 12:02</span></div>
<div class="li" style="top:261px"><i class="tri"></i><span class="tx">劳务付款申请_上海市美容医院ICU手术室净化工程_李若若_上...</span><span class="dt">2020-01-02 12:02</span></div>
<div class="li" style="top:296px"><i class="tri"></i><span class="tx">完工结算_西安成都路龙湖上河城项目_西安成都路龙湖上河城项...</span><span class="dt">2020-01-02 12:02</span></div>
<div class="li" style="top:331px"><i class="tri"></i><span class="tx">进度款申报_广安邓小平纪念馆安全防范系统维护保养项目_广安...</span><span class="dt">2020-01-02 12:02</span></div>
<div class="li" style="top:366px"><i class="tri"></i><span class="tx">完工结算_龙湖天街城1区设计采购施工（EPC）总承包工程_龙...</span><span class="dt">2020-01-02 12:00</span></div>
</div>
<div class="panel" style="left:1346px;top:518px;height:420px">
<div class="ph"><span class="t">我的已办</span><span class="more"><svg width="37" height="13" viewBox="0 0 37 13" style="position:absolute;left:-1px;top:-1px"><g fill="#ff5500"><path d="M5 4h4.8v5.2H8.7V5.2H7.95V7.4H6.85V5.2H6.1v4H5z"/><path d="M11.2 4h3.9l.7.7v3.8l-.7.7h-3.9l-.7-.7V4.7zm.6 1.3v2.6h2.7V5.3z"/><path d="M17 4h3.9l.7.7v1.7l-.5.5.9 2.3h-1.4l-.8-2h-1.5v2H17zm1.3 1.3v1.4h2V5.3z"/><path d="M22.8 4h4.5v1.3h-3.2v.7h2.9v1.2h-2.9v.7h3.2v1.3h-4.5z"/><path d="M31 4l2.8 2.6L31 9.2z"/></g></svg></span></div>
<div class="li" style="top:51px"><i class="tri"></i><span class="tx">费用报销_潼南区2019年绿化补贴项目-施工2标段_张鑫_2020-...</span><span class="dt">2020.01.03</span></div>
<div class="li" style="top:86px"><i class="tri"></i><span class="tx">费用报销_潼南区2019年绿化补贴项目-施工2标段_张鑫_2020-...</span><span class="dt">2020.01.03</span></div>
<div class="li" style="top:121px"><i class="tri"></i><span class="tx">施工日志_张鑫_重庆太极制药有限公司亳州中药材仓储物流基...</span><span class="dt">2020.01.02</span></div>
<div class="li" style="top:156px"><i class="tri"></i><span class="tx">张鑫_用品领用申请_账簿_财务用品_领导审批_肖晴,</span><span class="dt">2020.01.02</span></div>
<div class="li" style="top:191px"><i class="tri"></i><span class="tx">质量整改_张鑫_华润12城房建工程项目_2021-02-02_领导审批...</span><span class="dt">2020.01.02</span></div>
<div class="li" style="top:226px"><i class="tri"></i><span class="tx">技术交底_龙湖三千里小区_张鑫_2020-12-02_领导审批_宋浩然,</span><span class="dt">2020.01.02</span></div>
<div class="li" style="top:261px"><i class="tri"></i><span class="tx">进度款申报_万达广场35#会所及咖啡厅空调安装工程_万达广...</span><span class="dt">2020.01.02</span></div>
<div class="li" style="top:296px"><i class="tri"></i><span class="tx">张永银_2020-08-26_湖南洞庭湖水库引水工程施工I标_部门经...</span><span class="dt">2020.01.02</span></div>
<div class="li" style="top:331px"><i class="tri"></i><span class="tx">进度款申报_华软大厦研究基地中央空调系统工程_华软大厦研...</span><span class="dt">2020.01.02</span></div>
<div class="li" style="top:366px"><i class="tri"></i><span class="tx">黄敏_2020-05-22_江苏成品油二期项目一标段工程_部门经理...</span><span class="dt">2020.01.02</span></div>
</div>
<div style="position:absolute;left:1760px;top:866px;width:130px;height:48px;opacity:.55">
<svg style="position:absolute;left:-2px;top:2px" width="30" height="28" viewBox="10 5 52 46"><path fill="#1e3263" d="M13.1 28.5 L25.3 7.4 L43.6 7.4 C36 11 30.5 17 30 24 C29.5 33 27 40 23.9 45.8 Z"/><path fill="#cc531e" d="M49.5 10.5 Q56 15 60 25.3 Q51 26 44 30 Q38 33.5 33.3 38.7 Q33.5 28 35 21 Q38 13 49.5 10.5Z"/><path fill="#1e3263" d="M60.3 30.7 L49.8 49.2 L31.9 49.2 Q36 43 40 39 Q48 32 60.3 30.7Z"/></svg>
<div style="position:absolute;left:26px;top:0;font-size:24px;line-height:30px;color:#1f3466;letter-spacing:0">泛普软件</div>
<div style="position:absolute;left:2px;top:25px;font-family:'Liberation Serif',serif;font-size:14px;line-height:16px;color:#d45a1c;letter-spacing:.3px">www.fanpusoft.com</div>
</div>
</body></html>
